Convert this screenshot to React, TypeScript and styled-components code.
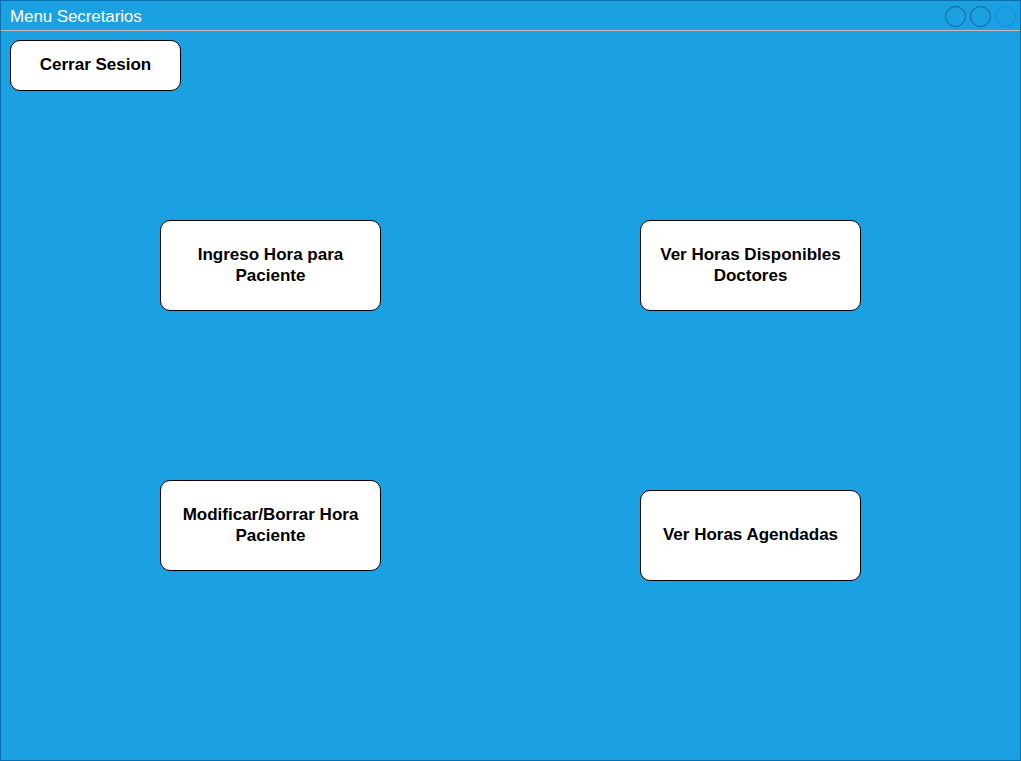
import React from "react";
import styled, { createGlobalStyle } from "styled-components";

const Global = createGlobalStyle`
  html, body { margin: 0; padding: 0; background: #ffffff; }
  body { font-family: "Liberation Sans", Arial, Helvetica, sans-serif; }
`;

const Window = styled.div`
  box-sizing: border-box;
  width: 1021px;
  height: 761px;
  background: #1ba1e2;
  border: 1px solid #0b6fae;
  display: flex;
  flex-direction: column;
`;

const TitleBar = styled.div`
  box-sizing: border-box;
  height: 30px;
  flex: 0 0 30px;
  border-bottom: 1px solid #c9bdb6;
  display: flex;
  align-items: center;
  justify-content: space-between;
  padding: 0 4px 0 9px;
`;

const Title = styled.span`
  color: #ffffff;
  font-size: 17px;
  line-height: 1;
  margin-top: 1px;
  letter-spacing: -0.1px;
`;

const Controls = styled.div`
  display: flex;
  gap: 4px;
  margin-top: 1px;
`;

const Dot = styled.span<{ $ring: string }>`
  box-sizing: border-box;
  width: 21px;
  height: 21px;
  border-radius: 50%;
  border: 1px solid ${(p) => p.$ring};
`;

const Body = styled.div`
  flex: 1;
  display: flex;
  flex-direction: column;
  padding: 9px 0 0 9px;
`;

const Button = styled.div<{ $w: number; $h: number }>`
  box-sizing: border-box;
  width: ${(p) => p.$w}px;
  height: ${(p) => p.$h}px;
  background: #ffffff;
  border: 1px solid #000000;
  border-radius: 10px;
  display: flex;
  align-items: center;
  justify-content: center;
  text-align: center;
  color: #000000;
  font-weight: bold;
  font-size: 17px;
  line-height: 21px;
  padding: 0 8px 2px;
`;

const Grid = styled.div`
  display: grid;
  grid-template-columns: 221px 221px;
  column-gap: 259px;
  row-gap: 169px;
  padding: 129px 0 0 150px;
  align-items: start;
`;

const Cell = styled.div<{ $shift?: number }>`
  margin-top: ${(p) => p.$shift ?? 0}px;
`;

export default function App() {
  return (
    <>
      <Global />
      <Window>
        <TitleBar>
          <Title>Menu Secretarios</Title>
          <Controls>
            <Dot $ring="#0d5d99" />
            <Dot $ring="#0d5d99" />
            <Dot $ring="#0a8cf0" />
          </Controls>
        </TitleBar>
        <Body>
          <Button $w={171} $h={51}>Cerrar Sesion</Button>
          <Grid>
            <Cell>
              <Button $w={221} $h={91}>Ingreso Hora para Paciente</Button>
            </Cell>
            <Cell>
              <Button $w={221} $h={91}>Ver Horas Disponibles Doctores</Button>
            </Cell>
            <Cell>
              <Button $w={221} $h={91}>Modificar/Borrar Hora Paciente</Button>
            </Cell>
            <Cell $shift={10}>
              <Button $w={221} $h={91}>Ver Horas Agendadas</Button>
            </Cell>
          </Grid>
        </Body>
      </Window>
    </>
  );
}
